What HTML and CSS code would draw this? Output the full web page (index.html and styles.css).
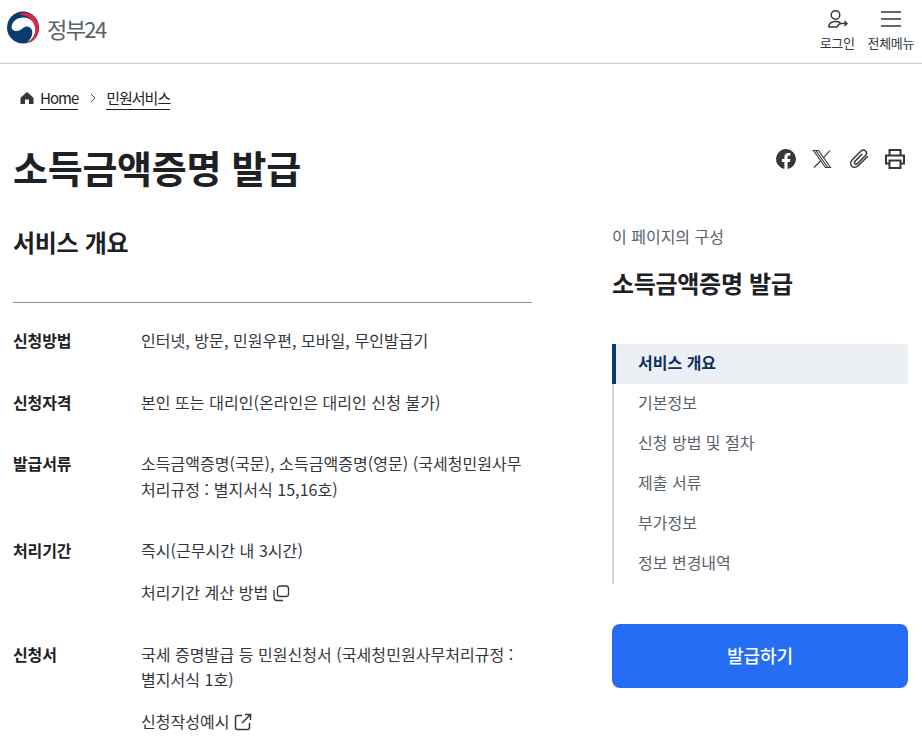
FILE: index.html
```html
<!DOCTYPE html>
<html lang="ko">
<head>
<meta charset="utf-8">
<title>소득금액증명 발급</title>
<link rel="stylesheet" href="styles.css">
</head>
<body>
<header class="header">
  <a class="logo">
    <svg class="logo-mark" width="34" height="34" viewBox="0 0 34 34">
      <circle cx="17" cy="16.500" r="16" fill="#0b3b6f"/>
      <path d="M5.500 17C5.500 10 12 6 18.500 6.500C25 7 29.500 12 29.500 18.500C29.500 24 26 29 21 31.500C25 28 27 23.500 26 19.500C25 15.500 20 14 17 17C14 20 8 22 5.500 17Z" fill="#fff"/>
      <path d="M13 3.500C18 0.300 26 1.800 30 8C33.500 13 33.800 20 31 25C29 28.500 26 31 22.500 32.200C26.500 28.500 29.800 23.500 29.500 18C29.200 10.500 22 4 13 3.500Z" fill="#e5243f"/>
    </svg>
    <span class="logo-text">정부24</span>
  </a>
  <nav class="util">
    <a class="util-item">
      <svg class="icon-login" width="24" height="24" viewBox="0 0 24 24" fill="none" stroke="#33363d" stroke-width="1.400">
        <circle cx="9.500" cy="8" r="4.300"/>
        <path d="M2.500 20C3 16.500 6 14.500 9.500 14.500C11.500 14.500 13 15 14.500 15.700"/>
        <path d="M2.500 20H11C12 18 13.500 16.500 15 16.500H21M18.500 14L21 16.500L18.500 19"/>
      </svg>
      <span>로그인</span>
    </a>
    <a class="util-item">
      <svg width="24" height="24" viewBox="0 0 24 24" fill="none" stroke="#33363d" stroke-width="1.500">
        <path d="M2 5H22M2 12H22M2 19H22"/>
      </svg>
      <span>전체메뉴</span>
    </a>
  </nav>
</header>

<nav class="crumbs">
  <svg class="home" width="14" height="14" viewBox="0 0 14 14"><path d="M7 1L13.500 6.800V13H9V8.500H5V13H0.500V6.800Z" fill="#33363d"/></svg>
  <a class="crumb">Home</a>
  <svg class="sep" width="8" height="10" viewBox="0 0 8 10" fill="none" stroke="#464c53"><path d="M2 1L6 5L2 9"/></svg>
  <a class="crumb">민원서비스</a>
</nav>

<div class="title-row">
  <h1 class="title">소득금액증명 발급</h1>
  <div class="share">
    <svg width="22" height="22" viewBox="0 0 22 22"><path d="M21 11A10 10 0 1 0 9.400 20.900V13.900H6.900V11H9.400V8.800C9.400 6.300 10.900 4.900 13.200 4.900C14.300 4.900 15.400 5.100 15.400 5.100V7.500H14.200C13 7.500 12.600 8.300 12.600 9V11H15.300L14.900 13.900H12.600V20.900A10 10 0 0 0 21 11Z" fill="#33363d"/></svg>
    <svg width="22" height="22" viewBox="0 0 22 22" fill="none" stroke="#33363d" stroke-width="1.100"><path d="M2.500 2.500H7.500L19.500 19.500H14.500ZM4.800 2.500L16.800 19.500M19 2.500L12 10.200M10 12.500L3 19.500"/></svg>
    <svg width="22" height="22" viewBox="0 0 22 22" fill="none" stroke="#33363d" stroke-width="1.500" stroke-linecap="round"><path d="M19.500 8.500L10.500 17.500C8.500 19.500 5.500 19.800 3.800 18.200C2.200 16.500 2.500 13.500 4.500 11.500L12.500 3.500C14 2 16.200 1.800 17.500 3C18.800 4.300 18.500 6.500 17 8L9.500 15.500C8.700 16.300 7.500 16.500 6.800 15.800C6.100 15.100 6.300 13.900 7.100 13.100L14 6.200"/></svg>
    <svg width="22" height="22" viewBox="0 0 22 22" fill="none" stroke="#33363d" stroke-width="2"><path d="M5.500 7V2H16.500V7M5.500 15.500H2V7.500H20V15.500H16.500"/><path d="M5.500 12.500H16.500V20H5.500Z"/></svg>
  </div>
</div>

<div class="columns">
  <main class="content">
    <h2 class="section-title">서비스 개요</h2>
    <dl class="info">
      <div class="row">
        <dt>신청방법</dt>
        <dd><p>인터넷, 방문, 민원우편, 모바일, 무인발급기</p></dd>
      </div>
      <div class="row">
        <dt>신청자격</dt>
        <dd><p>본인 또는 대리인(온라인은 대리인 신청 불가)</p></dd>
      </div>
      <div class="row">
        <dt>발급서류</dt>
        <dd><p>소득금액증명(국문), 소득금액증명(영문) (국세청민원사무<br>처리규정 : 별지서식 15,16호)</p></dd>
      </div>
      <div class="row">
        <dt>처리기간</dt>
        <dd>
          <p>즉시(근무시간 내 3시간)</p>
          <a class="doc-link">처리기간 계산 방법
            <svg width="18" height="18" viewBox="0 0 18 18" fill="none" stroke="#33363d" stroke-width="1.300"><rect x="5.500" y="2" width="11" height="10.500" rx="2.500"/><path d="M2 6V13.500C2 15.500 3 16.500 5 16.500H11"/></svg>
          </a>
        </dd>
      </div>
      <div class="row">
        <dt>신청서</dt>
        <dd>
          <p>국세 증명발급 등 민원신청서 (국세청민원사무처리규정 :<br>별지서식 1호)</p>
          <a class="doc-link">신청작성예시
            <svg width="18" height="18" viewBox="0 0 18 18" fill="none" stroke="#33363d" stroke-width="1.500"><path d="M8 2.500H3.500C2.500 2.500 1.500 3.500 1.500 4.500V14.500C1.500 15.500 2.500 16.500 3.500 16.500H13.500C14.500 16.500 15.500 15.500 15.500 14.500V10M11 1.500H16.500V7M16.500 1.500L8 10"/></svg>
          </a>
        </dd>
      </div>
    </dl>
  </main>
  <aside class="side">
    <p class="side-label">이 페이지의 구성</p>
    <h2 class="side-title">소득금액증명 발급</h2>
    <ul class="toc">
      <li class="toc-item is-active">서비스 개요</li>
      <li class="toc-item">기본정보</li>
      <li class="toc-item">신청 방법 및 절차</li>
      <li class="toc-item">제출 서류</li>
      <li class="toc-item">부가정보</li>
      <li class="toc-item">정보 변경내역</li>
    </ul>
    <a class="apply">발급하기</a>
  </aside>
</div>
</body>
</html>
```

FILE: styles.css
```css
* { box-sizing: border-box; }
html, body { margin: 0; height: 100%; overflow: hidden; background: #fff; }
body { font-family: "Noto Sans CJK KR", "Noto Sans", sans-serif; color: #1e2124; }
p, h1, h2, dl, dd, ul { margin: 0; padding: 0; }
ul { list-style: none; }

.header { height: 64px; border-bottom: 1px solid #cdcdcd; display: flex; justify-content: space-between; align-items: flex-start; padding: 0 8px 0 6px; }
.logo { display: flex; align-items: center; gap: 7px; height: 56px; }
.logo-text { font-size: 22px; letter-spacing: -1.6px; color: #58616a; }
.util { display: flex; gap: 13px; padding-top: 7px; }
.util-item { display: flex; flex-direction: column; align-items: center; font-size: 13px; line-height: 18px; letter-spacing: -0.35px; color: #33363d; gap: 3px; }
.icon-login { margin-left: 1px; }

.crumbs { display: flex; align-items: center; height: 24px; margin: 22px 0 0 20px; font-size: 15px; letter-spacing: -1px; color: #1e2124; }
.home { margin-right: 6px; }
.crumb { line-height: 22px; border-bottom: 1px solid #1e2124; }
.sep { margin: 0 9px 0 11px; }

.title-row { display: flex; justify-content: space-between; align-items: flex-start; margin-top: 32px; padding: 0 16px 0 13px; }
.title { font-size: 38px; line-height: 50px; font-weight: 700; letter-spacing: -0.27px; color: #1e2124; }
.share { display: flex; gap: 14.33px; padding-top: 6px; }

.columns { display: flex; justify-content: space-between; padding: 0 14px 0 13px; margin-top: 19px; }
.content { width: 519px; }
.section-title { font-size: 24px; line-height: 36px; font-weight: 700; padding-top: 13px; height: 92px; letter-spacing: -0.3px; border-bottom: 1px solid #8f8f8f; }
.info { padding-top: 25px; }
.row { display: flex; margin-bottom: 36px; font-size: 16px; line-height: 25.6px; }
.row dt { width: 128px; flex: none; font-weight: 700; letter-spacing: -0.1px; }
.row dd { flex: 1; letter-spacing: 0.05px; color: #33363d; }
.doc-link { display: flex; align-items: center; gap: 4px; margin-top: 16px; }

.side { width: 296px; }
.side-label { font-size: 16px; line-height: 24px; color: #58616a; margin-top: 13px; }
.side-title { font-size: 24px; line-height: 32px; font-weight: 700; margin-top: 19px; letter-spacing: -0.3px; }
.toc { margin-top: 45px; border-left: 2px solid #cdd5e0; }
.toc-item { height: 40px; line-height: 36px; padding-left: 24px; font-size: 16px; color: #58616a; }
.toc-item.is-active { margin-left: -2px; padding-left: 22px; border-left: 4px solid #0b3b7a; background: #eceff4; color: #0b3060; font-weight: 700; }
.apply { display: flex; align-items: center; justify-content: center; height: 64px; margin-top: 40px; padding-bottom: 2px; border-radius: 8px; background: #256ef4; color: #fff; font-size: 18px; font-weight: 500; }
```
